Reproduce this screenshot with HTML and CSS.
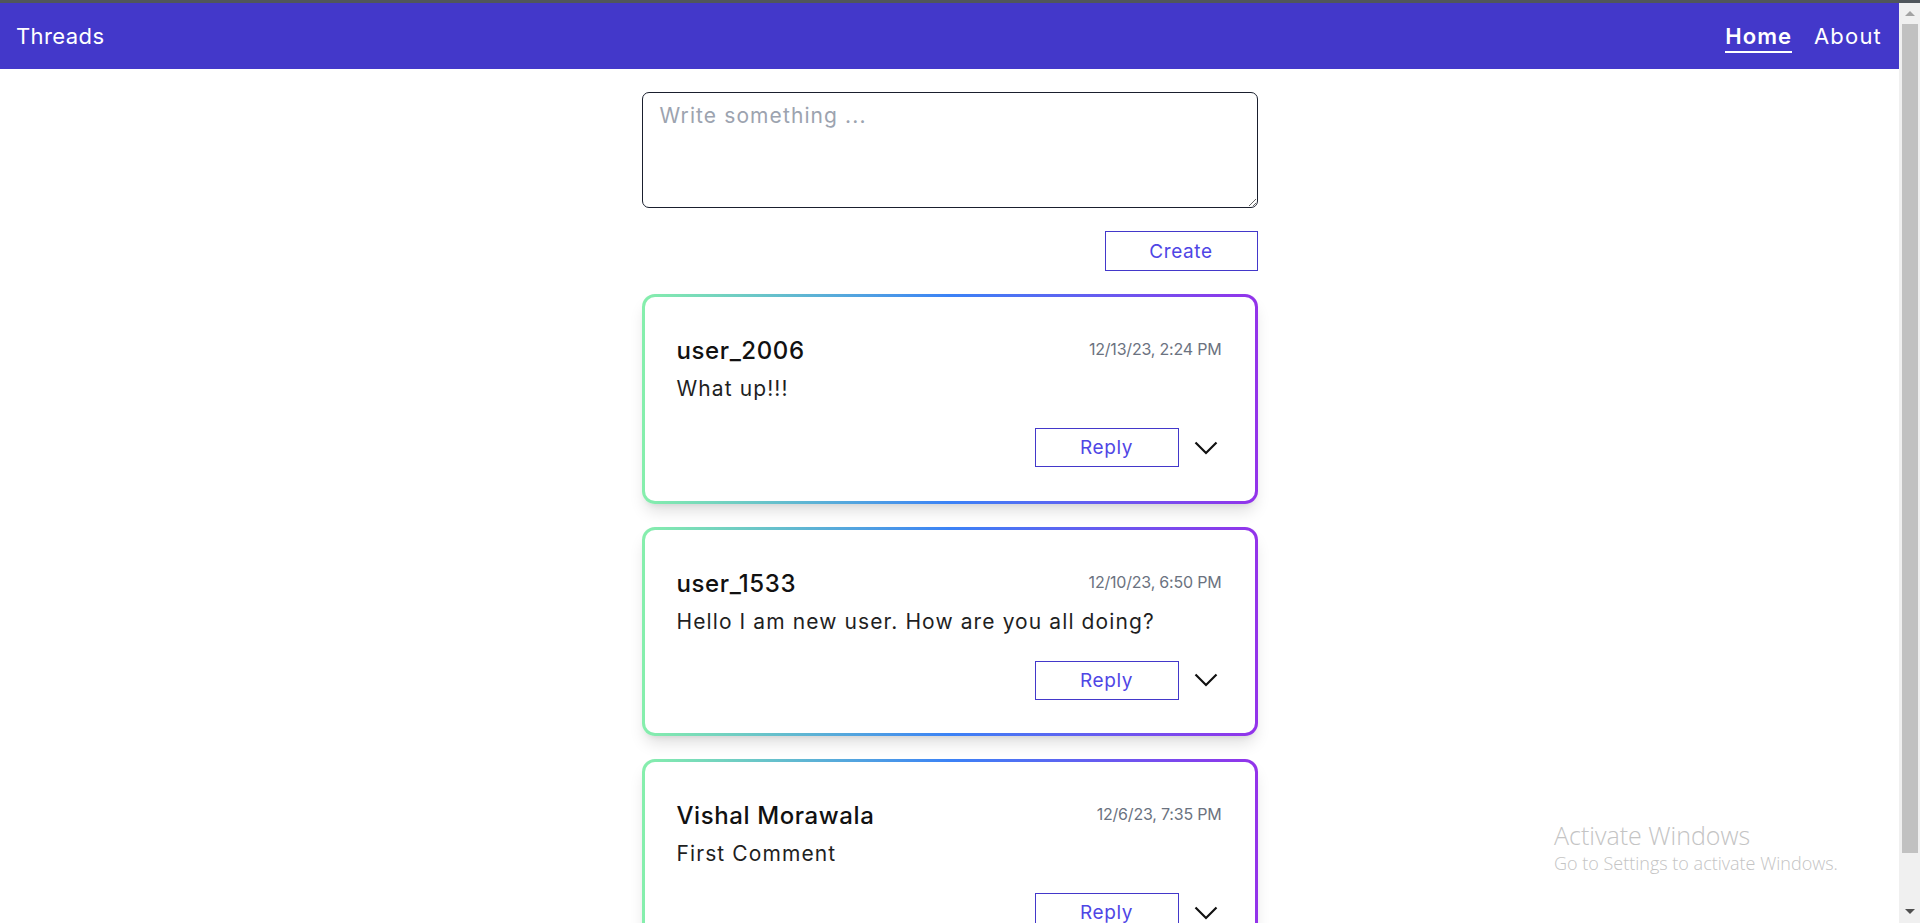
FILE: index.html
```html
<!DOCTYPE html>
<html lang="en">
<head>
<meta charset="utf-8">
<title>Threads</title>
<link rel="stylesheet" href="styles.css">
</head>
<body>
<div class="frame">
  <div class="top-strip"></div>
  <div class="window">
    <div class="viewport">
      <nav class="navbar">
        <a class="brand">Threads</a>
        <div class="nav-links">
          <a class="nav-link active">Home</a>
          <a class="nav-link">About</a>
        </div>
      </nav>
      <main class="feed">
        <textarea class="composer" placeholder="Write something ..."></textarea>
        <div class="composer-actions">
          <button class="btn btn-create">Create</button>
        </div>

        <article class="card">
          <div class="card-head">
            <span class="username">user_2006</span>
            <span class="date">12/13/23, 2:24 PM</span>
          </div>
          <p class="message">What up!!!</p>
          <div class="card-actions">
            <button class="btn btn-reply">Reply</button>
            <svg class="chevron" width="24" height="14" viewBox="0 0 24 14"><path d="M1.5 1.5 L12 12 L22.5 1.5" fill="none" stroke="#111" stroke-width="2.2"/></svg>
          </div>
        </article>

        <article class="card">
          <div class="card-head">
            <span class="username">user_1533</span>
            <span class="date">12/10/23, 6:50 PM</span>
          </div>
          <p class="message">Hello I am new user. How are you all doing?</p>
          <div class="card-actions">
            <button class="btn btn-reply">Reply</button>
            <svg class="chevron" width="24" height="14" viewBox="0 0 24 14"><path d="M1.5 1.5 L12 12 L22.5 1.5" fill="none" stroke="#111" stroke-width="2.2"/></svg>
          </div>
        </article>

        <article class="card">
          <div class="card-head">
            <span class="username">Vishal Morawala</span>
            <span class="date">12/6/23, 7:35 PM</span>
          </div>
          <p class="message">First Comment</p>
          <div class="card-actions">
            <button class="btn btn-reply">Reply</button>
            <svg class="chevron" width="24" height="14" viewBox="0 0 24 14"><path d="M1.5 1.5 L12 12 L22.5 1.5" fill="none" stroke="#111" stroke-width="2.2"/></svg>
          </div>
        </article>
      </main>
    </div>
    <div class="scrollbar">
      <div class="sb-arrow sb-up"></div>
      <div class="sb-track"><div class="sb-thumb"></div></div>
      <div class="sb-arrow sb-down"></div>
    </div>
  </div>
  <div class="watermark">
    <div class="wm-title">Activate Windows</div>
    <div class="wm-sub">Go to Settings to activate Windows.</div>
  </div>
</div>
</body>
</html>
```

FILE: styles.css
```css
* { box-sizing: border-box; }

html, body {
  margin: 0;
  padding: 0;
  height: 100%;
  overflow: hidden;
  background: #fff;
  font-family: Inter, "Noto Sans", "DejaVu Sans", sans-serif;
}

.frame {
  position: relative;
  width: 1920px;
  height: 923px;
  display: flex;
  flex-direction: column;
  overflow: hidden;
}

.top-strip {
  height: 3px;
  flex: none;
  background: #50565c;
}

.window {
  flex: 1;
  display: flex;
  min-height: 0;
}

.viewport {
  flex: 1;
  min-width: 0;
  overflow: hidden;
}

/* Navbar */
.navbar {
  height: 66px;
  background: #4338ca;
  display: flex;
  align-items: center;
  justify-content: space-between;
  padding: 0 17px 0 16px;
  color: #fff;
}

.brand {
  font-size: 22px;
  letter-spacing: 0.4px;
}

.nav-links {
  display: flex;
  gap: 22px;
  align-items: center;
}

.nav-link {
  font-size: 22px;
  letter-spacing: 1.2px;
  padding-bottom: 1px;
  border-bottom: 2px solid transparent;
  line-height: 27px;
  margin-top: 4px;
}

.nav-link.active {
  font-weight: 600;
  letter-spacing: 1px;
  border-bottom-color: #fff;
}

/* Feed */
.feed {
  width: 616px;
  margin: 0 auto;
  padding-top: 23px;
  display: flex;
  flex-direction: column;
  gap: 23px;
}

.composer {
  display: block;
  width: 100%;
  height: 116px;
  border: 1px solid #1a1f2e;
  border-radius: 7px;
  padding: 8px 17px;
  font-family: inherit;
  font-size: 21px;
  line-height: 30px;
  letter-spacing: 1.1px;
  color: #111;
  outline: none;
}

.composer::placeholder {
  color: #9ca3af;
}

.composer-actions {
  display: flex;
  justify-content: flex-end;
}

.btn {
  background: #fff;
  border: 1px solid #4338ca;
  color: #4f46e5;
  font-family: inherit;
  font-size: 19px;
  letter-spacing: 0.6px;
  height: 40px;
  padding: 0;
  cursor: pointer;
}

.btn-create { width: 153px; }

/* Card */
.card {
  flex: none;
  height: 209.5px;
  border: 3px solid transparent;
  border-radius: 13px;
  background:
    linear-gradient(#fff, #fff) padding-box,
    linear-gradient(to right, #86efac, #3b82f6 50%, #9333ea) border-box;
  box-shadow: 0 10px 16px -3px rgba(0, 0, 0, 0.13), 0 4px 6px -4px rgba(0, 0, 0, 0.1);
  padding: 38px 33px 0 32px;
}

.card-head {
  display: flex;
  justify-content: space-between;
  align-items: flex-start;
  height: 32px;
}

.username {
  font-size: 24px;
  line-height: 32px;
  font-weight: 500;
  color: #111;
  letter-spacing: 0.6px;
}

.date {
  font-size: 16px;
  line-height: 24px;
  margin-top: 2px;
  color: #6b7280;
  letter-spacing: -0.2px;
}

.message {
  margin: 7px 0 0;
  font-size: 21px;
  line-height: 30px;
  color: #1f1f1f;
  letter-spacing: 1.1px;
}

.card-actions {
  margin-top: 24px;
  margin-right: 4px;
  display: flex;
  justify-content: flex-end;
  align-items: center;
  gap: 15px;
}

.btn-reply { width: 144px; height: 39px; }

.chevron { display: block; }

/* Scrollbar */
.scrollbar {
  width: 21px;
  flex: none;
  background: #f0f0f0;
  display: flex;
  flex-direction: column;
  align-items: center;
}

.sb-arrow {
  width: 0;
  height: 0;
  border-left: 5px solid transparent;
  border-right: 5px solid transparent;
  flex: none;
}

.sb-up {
  margin-top: 8px;
  border-bottom: 5px solid #a3a3a3;
}

.sb-down {
  margin: 0 0 9px;
  border-top: 5px solid #505050;
}

.sb-track {
  flex: 1;
  width: 100%;
  padding: 8px 2px 56px 3px;
  display: flex;
}

.sb-thumb {
  flex: 1;
  background: #c1c1c1;
}

/* Windows watermark overlay */
.watermark {
  position: absolute;
  left: 1554px;
  top: 819px;
  font-family: "Open Sans", "Noto Sans", sans-serif;
  color: #c4c4c4;
  pointer-events: none;
}

.wm-title {
  font-size: 25px;
  line-height: 32px;
  font-weight: 300;
}

.wm-sub {
  font-size: 18px;
  line-height: 22px;
  font-weight: 300;
  margin-top: 1px;
}
```
